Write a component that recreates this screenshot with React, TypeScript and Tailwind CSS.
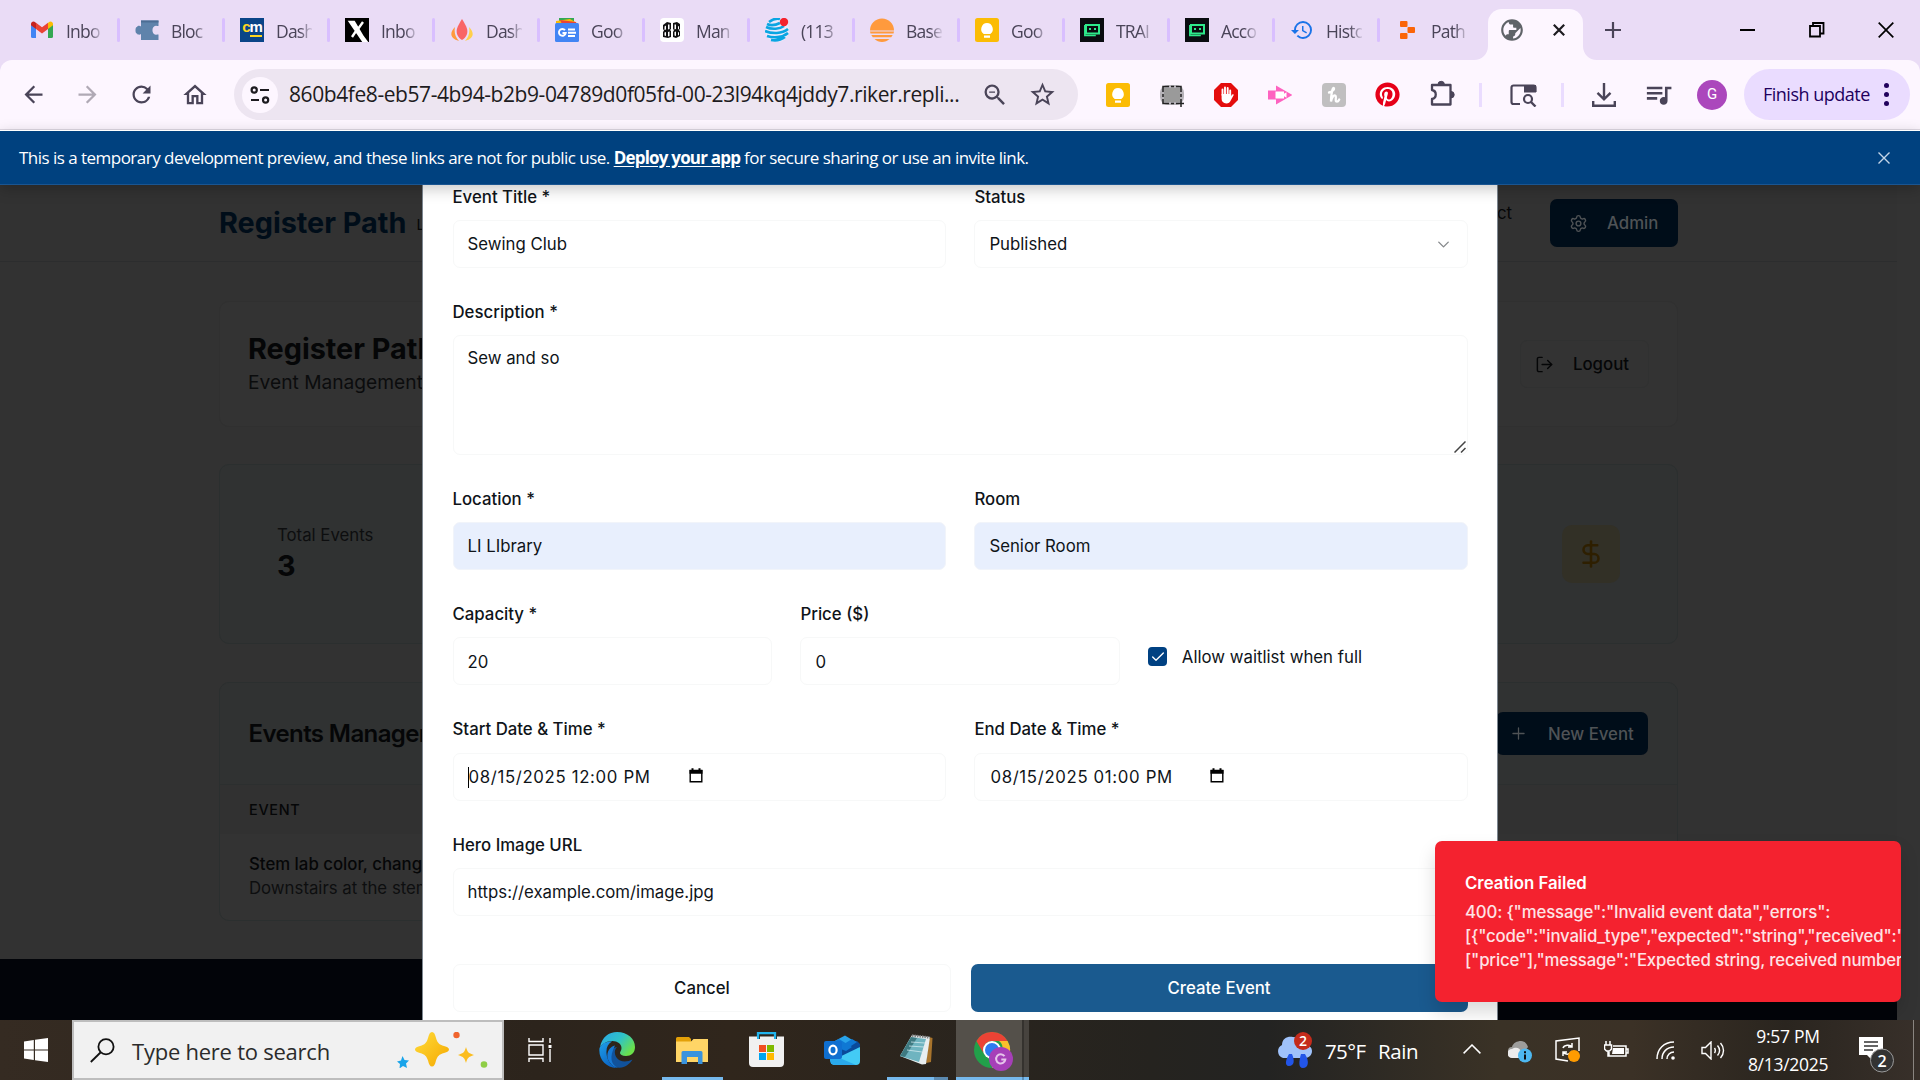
import React from "react";
import { Settings, LogOut, DollarSign, Plus, ChevronDown, Check } from "lucide-react";
import {
  MdArrowBack,
  MdArrowForward,
  MdRefresh,
  MdOutlineHome,
  MdZoomOut,
  MdStarBorder,
  MdQueueMusic,
  MdHistory,
  MdPublic,
} from "react-icons/md";
import { FaPinterest } from "react-icons/fa";

type Kids = { children?: React.ReactNode };

/* ---------- favicons ---------- */

const Svg24 = ({ children, size = 24 }: Kids & { size?: number }) => (
  <svg width={size} height={size} viewBox="0 0 24 24" className="block shrink-0">
    {children}
  </svg>
);

const Gmail = () => (
  <Svg24>
    <path d="M1 6v12.5A1.5 1.5 0 0 0 2.500 20H6V9.500z" fill="#4285f4" />
    <path d="M23 6v12.500a1.500 1.500 0 0 1-1.500 1.500H18V9.500z" fill="#34a853" />
    <path d="M18 5v6l5-3.700V6c0-2.400-2.500-3.200-4-2z" fill="#fbbc04" />
    <path d="M6 5v6L1 7.300V6c0-2.400 2.500-3.200 4-2z" fill="#c5221f" />
    <path d="M6 11V4.800l6 4.500 6-4.500V11l-6 4.600z" fill="#ea4335" />
  </Svg24>
);
const Puzzle = () => (
  <Svg24>
    <path d="M6 2.500h17.500v5.500h-1.500c-6-2-6 10.500 0 8.500h1.500V22H6v-6c-1 1-3.500 1-4-.5-2 .5-2-7 0-6.500C2.500 7.500 5 7.500 6 8.500z" fill="#5f83ab" />
    <path d="M6 2.500h17.500v2H6z" fill="#4c6d94" />
  </Svg24>
);
const Cm = () => (
  <div className="flex h-6 w-6 shrink-0 flex-col items-center bg-[#0a4588] font-['Liberation_Sans'] text-[15px] font-bold leading-[17px] tracking-[-1px] text-white">
    <span>
      <span className="text-[#ffd51e]">c</span>m
    </span>
    <span className="ml-2 h-[2px] w-3 bg-[#ffd51e]" />
  </div>
);
const XIcon = () => (
  <Svg24>
    <rect width="24" height="24" fill="#000" />
    <path d="M5 4h4l9 15 3 4h-3zM18 4l-5 7M11 13l-4 6" fill="#fff" stroke="#fff" strokeWidth="2.400" />
  </Svg24>
);
const Flame = () => (
  <Svg24>
    <path d="M5 9c-5 5-6 11 4 14C5 19 4 14 5 9z" fill="#ff9a3c" />
    <path d="M19 9c5 5 6 11-4 14 4-4 5-9 4-14z" fill="#ffd04a" />
    <path d="M12 1c5 8 6 11 5 15-1 3-3 5-5 6-2-1-4-3-5-6-1-4 0-7 5-15z" fill="#f96565" />
  </Svg24>
);
const News = () => (
  <Svg24>
    <path d="M4 0h15v8H4z" fill="#34a853" />
    <path d="M1 3l14-2 7 4v4H1z" fill="#fbbc04" />
    <path d="M5 2l16 2v4H8z" fill="#ea4335" />
    <rect y="5" width="24" height="19" rx="1.500" fill="#4285f4" />
    <path d="M10 12.200a3.400 3.400 0 1 0 .7 2.800H7.500M13 11.500h7M13 14.700h8M13 18h7" fill="none" stroke="#fff" strokeWidth="1.900" />
  </Svg24>
);
const Man = () => (
  <Svg24>
    <rect width="24" height="24" rx="4" fill="#fff" />
    <path d="M3 7l4-3 4 1v6l-1 1 1 1v6l-3 1-5-1v-5l1-1.500L3 11zM13 5l4-1 3 2v5l-1 1 1 1.500V18l-4 2-3-1v-5l1-2-1-1z" fill="#111" />
    <path d="M4.500 8.500L6 7.500v4l-1.500.5zM4.500 14.500L6 14v4l-1.500-.5zM8 6.500h1.500V11L8 11.500zM14.500 6.500H16V11l-1.500.5zM18 8l1 .5v2.500l-1 .500zM14.500 14l1.500-.5V18l-1.500-.5zM18 14l1 .5V17l-1 .5zM8 14l1.500-.5V18L8 18.500z" fill="#fff" />
  </Svg24>
);
const Att = () => (
  <Svg24>
    <circle cx="12" cy="12" r="12" fill="#ece9fb" />
    <path
      d="M4 4c4-3 8-4 11-3M1 9c6 3 14 2 18-1M0 13c7 3 17 3 23-2M2 18c6 2 15 2 21-3M6 22c5 1 10 0 14-3M2 6c4 2 9 1 13-1"
      fill="none"
      stroke="#0aa5e2"
      strokeWidth="2.600"
    />
    <circle cx="19" cy="4" r="4.200" fill="#f5222d" />
  </Svg24>
);
const Base = () => (
  <Svg24>
    <path d="M0 12.500a12 12 0 0 1 24 0z" fill="#ff9a3d" />
    <path d="M0 13.500h24l-.5 2h-23zM1.300 17h21.400l-1.500 2.300H2.800zM4.500 21h15c-4 4-11 4-15 0z" fill="#ff9a3d" />
  </Svg24>
);
const Keep = () => (
  <Svg24>
    <rect width="24" height="24" rx="2.500" fill="#fbbc04" />
    <path d="M12 5a6 6 0 0 1 3.500 10.700v.3h-7v-.3A6 6 0 0 1 12 5zM9 17.500h6v2.300H9z" fill="#fff" />
  </Svg24>
);
const Robot = () => (
  <Svg24>
    <rect width="24" height="24" fill="#0a0c10" />
    <rect x="6" y="7" width="13" height="8.500" fill="none" stroke="#2eea8b" strokeWidth="2" />
    <path d="M4.800 7v10.500h11" fill="none" stroke="#2eea8b" strokeWidth="1.500" />
    <path d="M9 10h2v2H9zM14 10h2v2h-2z" fill="#2eea8b" />
  </Svg24>
);
const Hist = () => <MdHistory size={24} color="#1a73e8" className="shrink-0" />;
const Replit = () => (
  <Svg24>
    <rect x="5" y="3" width="7.500" height="6" rx="1" fill="#fb6508" />
    <rect x="12.500" y="9" width="7.500" height="6" rx="1" fill="#fb6508" />
    <rect x="5" y="15" width="7.500" height="6" rx="1" fill="#fb6508" />
  </Svg24>
);

const tabs: { icon: React.ReactNode; text: string }[] = [
  { icon: <Gmail />, text: "Inbo" },
  { icon: <Puzzle />, text: "Bloc" },
  { icon: <Cm />, text: "Dash" },
  { icon: <XIcon />, text: "Inbo" },
  { icon: <Flame />, text: "Dash" },
  { icon: <News />, text: "Goo" },
  { icon: <Man />, text: "Man" },
  { icon: <Att />, text: "(113" },
  { icon: <Base />, text: "Base" },
  { icon: <Keep />, text: "Goo" },
  { icon: <Robot />, text: "TRAI" },
  { icon: <Robot />, text: "Acco" },
  { icon: <Hist />, text: "Histo" },
  { icon: <Replit />, text: "Path" },
];

function TabStrip() {
  return (
    <div className="flex h-[60px] items-start bg-[#eadcf6] pl-[30px]">
      {tabs.map((t, i) => (
        <div key={i} className="flex h-[60px] w-[105px] shrink-0 items-center">
          {t.icon}
          <span className="ml-[12px] w-[36px] shrink-0 overflow-hidden whitespace-nowrap pt-[3px] text-[17.500px] tracking-[-0.8px] text-[#4a4458] [mask-image:linear-gradient(to_right,black_65%,transparent_105%)]">
            {t.text}
          </span>
          {i < 13 && <span className="ml-auto mr-[15px] h-6 w-[3px] rounded bg-[#d9bfff]" />}
        </div>
      ))}
      <div className="relative -ml-3 mt-[9px] flex h-[51px] w-[95px] items-center rounded-t-[14px] bg-[#fdf6ff] pb-[9px]">
        <svg width="14" height="14" className="absolute -left-[14px] bottom-0">
          <path d="M14 0v14H0C8 14 14 8 14 0z" fill="#fdf6ff" />
        </svg>
        <svg width="14" height="14" className="absolute -right-[14px] bottom-0">
          <path d="M0 0v14h14C6 14 0 8 0 0z" fill="#fdf6ff" />
        </svg>
        <MdPublic size={26} color="#5f6368" className="ml-[11px] -scale-x-100" />
        <svg width="12" height="12" viewBox="0 0 12 12" className="ml-[28px]">
          <path d="M.8.8l10.400 10.400M11.200.8L.8 11.200" stroke="#1d1b20" strokeWidth="2.200" />
        </svg>
      </div>
      <svg width="16" height="16" viewBox="0 0 16 16" className="ml-[22px] mt-[22px]">
        <path d="M8 0v16M0 8h16" stroke="#4a4458" strokeWidth="2.200" />
      </svg>
      <div className="ml-auto mr-[26px] mt-[22px] flex h-4 items-center">
        <span className="h-[2px] w-[15px] bg-black" />
        <svg width="16" height="16" viewBox="0 0 16 16" className="ml-[54px]">
          <path d="M1 4h10v10.500H1zM4 4V1h10.500v10.500H11" fill="none" stroke="#000" strokeWidth="1.800" />
        </svg>
        <svg width="16" height="16" viewBox="0 0 16 16" className="ml-[53px]">
          <path d="M.7.7l14.600 14.600M15.300.7L.7 15.300" stroke="#000" strokeWidth="1.700" />
        </svg>
      </div>
    </div>
  );
}

function Toolbar() {
  return (
    <div className="bg-[#eadcf6]">
      <div className="flex h-[70px] items-center rounded-t-[12px] border-b border-[#dfd8e3] bg-[#fdf6ff] pl-[20px]">
        <MdArrowBack size={27} color="#4a4458" />
        <MdArrowForward size={27} color="#b0a9b5" className="ml-[27px]" />
        <MdRefresh size={27} color="#4a4458" className="ml-[27px]" />
        <MdOutlineHome size={28} color="#4a4458" className="ml-[26px]" />
        <div className="ml-[25px] flex h-[51px] w-[844px] items-center rounded-full bg-[#ede5f1] pl-2">
          <span className="flex h-9 w-9 shrink-0 items-center justify-center rounded-full bg-[#fdf6ff]">
            <svg width="20" height="20" viewBox="0 0 20 20" fill="none" stroke="#1d1b20" strokeWidth="2.200">
              <circle cx="4.200" cy="5" r="2.600" />
              <path d="M10 5h9M1 15h8" />
              <circle cx="15.600" cy="15" r="2.600" />
            </svg>
          </span>
          <span className="ml-[11px] w-[680px] shrink-0 whitespace-nowrap text-[21px] tracking-[-0.42px] text-[#1d1b20]">
            860b4fe8-eb57-4b94-b2b9-04789d0f05fd-00-23l94kq4jddy7.riker.repli...
          </span>
          <MdZoomOut size={28} color="#4a4458" className="ml-[12px] shrink-0" />
          <MdStarBorder size={29} color="#4a4458" className="ml-[19px] shrink-0" />
        </div>
        <div className="ml-[28px] flex items-center gap-[30px]">
          <Keep />
          <Svg24>
            <rect x="0" y="2" width="24" height="20" rx="8" fill="#b5b2b8" />
            <rect x="4" y="5" width="16" height="14" fill="#9a9a9a" />
            <path d="M3 9V3.500h6M11 3.500h3M16 3.500h5V9M21 11v3M3 11v3M3 16v4.500h6M11 20.500h3M16 20.500h8M21 16v8" fill="none" stroke="#222" strokeWidth="1.500" />
          </Svg24>
          <Svg24>
            <path d="M7 0h10l7 7v10l-7 7H7l-7-7V7z" fill="#e40d0d" />
            <path d="M8.500 12V6.500M11 11V4.500M13.700 11V5M16.200 12V7.500" stroke="#fff" strokeWidth="1.900" strokeLinecap="round" />
            <path d="M7.600 11h9.500v2l1.200-1.500c.6-.8 1.800-.2 1.300.8L17 17c-1 2.500-2.500 3.500-4.700 3.500-3 0-4.700-2-4.700-4.700z" fill="#fff" />
          </Svg24>
          <Svg24>
            <path d="M0 7.500h8v9H0zM8 2.500L24.500 12 8 21.500z" fill="#fe62c0" />
            <path d="M7.500 8.500H16v2.200l2.500-1.500v5.600L16 13.300v2.200H7.500z" fill="#fff" />
          </Svg24>
          <Svg24>
            <rect width="24" height="24" rx="4" fill="#c0bfc0" />
            <path d="M7 9.500c3.500-.5 6-4 4.700-4.500S9 12 9 18.500c.8-4 2.500-6.500 4.200-6s-.5 5.500 1.200 6 2.300-1 2.800-2" fill="none" stroke="#fff" strokeWidth="2.300" strokeLinecap="round" />
          </Svg24>
          <span className="-mx-px rounded-full bg-white">
            <FaPinterest size={25} color="#e60019" />
          </span>
          <svg width="25" height="26" viewBox="0 0 25 26" className="-mt-[3px] ml-px">
            <path
              d="M2 5h18.500v19.500H2v-5.500c5-1 5-8 0-9z"
              fill="none"
              stroke="#4a4458"
              strokeWidth="2.300"
              strokeLinejoin="round"
            />
            <path d="M8 4.500a3.200 3.200 0 0 1 6.400 0zM21 11.500a3.200 3.200 0 0 1 0 6.400z" fill="#4a4458" stroke="#4a4458" />
          </svg>
        </div>
        <span className="ml-[24px] h-6 w-[3px] bg-[#eadcff]" />
        <svg width="27" height="24" viewBox="0 0 27 24" className="ml-[28px]">
          <path d="M10 21H3.500A2 2 0 0 1 1.500 19V4.500a2 2 0 0 1 2-2h20a2 2 0 0 1 2 2V9" fill="none" stroke="#4a4458" strokeWidth="2.200" />
          <path d="M14 2h12v7.500H14z" fill="#4a4458" />
          <circle cx="18" cy="16" r="4" fill="none" stroke="#4a4458" strokeWidth="2.200" />
          <path d="M21 19l4.500 4.500" stroke="#4a4458" strokeWidth="2.400" />
        </svg>
        <span className="ml-[24px] h-6 w-[3px] bg-[#eadcff]" />
        <svg width="24" height="24" viewBox="0 0 24 24" className="ml-[28px]" fill="none" stroke="#4a4458" strokeWidth="2.400">
          <path d="M12 0v16M5.500 9.800l6.500 6.500 6.500-6.500M1.200 18v4.800h21.600V18" />
        </svg>
        <MdQueueMusic size={31} color="#4a4458" className="ml-[27px]" />
        <span className="ml-[23px] flex h-[30px] w-[30px] items-center justify-center rounded-full bg-[#ab47bc] font-['Roboto'] text-[15px] text-white">
          G
        </span>
        <div className="ml-[17px] flex h-[51px] w-[166px] items-center rounded-full bg-[#eadcff] pl-[19px]">
          <span className="w-[110px] whitespace-nowrap text-[18px] tracking-[-0.5px] text-[#21005d]">Finish update</span>
          <span className="ml-[11px] flex flex-col gap-[4px]">
            <span className="h-[5px] w-[5px] rounded-full bg-[#21005d]" />
            <span className="h-[5px] w-[5px] rounded-full bg-[#21005d]" />
            <span className="h-[5px] w-[5px] rounded-full bg-[#21005d]" />
          </span>
        </div>
      </div>
    </div>
  );
}

function Banner() {
  return (
    <div className="relative z-30 flex h-[55px] items-center border-b border-t border-b-[#1a5591] border-t-white bg-[#00417f] pl-[19px] text-[17px] text-white shadow-[0_4px_14px_rgba(0,0,0,0.22)]">
      <span className="whitespace-nowrap tracking-[-0.525px]">
        This is a temporary development preview, and these links are not for public use.{" "}
        <span className="font-bold tracking-[-0.8px] underline underline-offset-2">Deploy your app</span> for secure sharing or use an invite link.
      </span>
      <svg width="12" height="12" viewBox="0 0 12 12" className="ml-auto mr-[30px]">
        <path d="M.5.500l11 11M11.500.5l-11 11" stroke="#c5d6e8" strokeWidth="1.400" />
      </svg>
    </div>
  );
}

/* ---------- dimmed page behind the dialog ---------- */

function Backdrop() {
  return (
    <div className="flex h-full">
      <div className="w-[1897px] bg-[#323232] text-[#050607]">
        <header className="flex h-[77px] items-center border-b border-[#2c2d2e] pl-[219px] pr-[219px]">
          <span className="text-[28.8px] font-bold leading-none text-[#000d19]">Register Path</span>
          <span className="ml-[10px] mt-1 w-[120px] whitespace-nowrap text-[14.4px]">Library</span>
          <span className="ml-auto mb-[19px] text-[16.8px]">Contact</span>
          <div className="ml-[38px] flex h-12 w-[128px] items-center rounded-[7px] bg-[#000d19] pl-[19px] text-[#4f5356]">
            <Settings size={19} strokeWidth={1.800} />
            <span className="ml-[19px] pt-px text-[16.8px] font-medium">Admin</span>
          </div>
        </header>
        <main className="flex flex-col pl-[219px] pr-[219px] pt-[39px]">
          <section className="flex h-[126px] items-center justify-between rounded-[10px] border border-[#303030] bg-[#333333] px-[28px]">
            <div className="mb-[2px]">
              <div className="text-[28.8px] font-bold leading-[38px]">Register Path</div>
              <div className="text-[19.2px] leading-[29px] text-[#0b0c0d]">Event Management</div>
            </div>
            <div className="flex h-[48px] w-[129px] items-center rounded-[7px] border border-[#303131] pl-[14px]">
              <LogOut size={19} strokeWidth={1.800} />
              <span className="ml-[19px] pt-[2px] text-[16.8px] font-medium">Logout</span>
            </div>
          </section>
          <section className="mt-[37px] flex h-[180px] items-center justify-between rounded-[10px] border border-[#2b2f2f] bg-[#303232] pl-[57px] pr-[57px]">
            <div>
              <div className="text-[16.8px] leading-[24px] text-[#0d0e0f]">Total Events</div>
              <div className="text-[28.8px] font-bold leading-[38px]">3</div>
            </div>
            <div className="flex h-[58px] w-[58px] items-center justify-center rounded-[10px] bg-[#323026]">
              <DollarSign size={30} color="#2e1f00" strokeWidth={2} />
            </div>
          </section>
          <section className="mt-[38px] h-[239px] overflow-hidden rounded-[10px] border border-[#2b2f2f] bg-[#333333]">
            <div className="flex h-[102px] items-center justify-between border-b border-[#2c2f2f] bg-[#303232] pl-[28.500px] pr-[29px]">
              <span className="pt-px text-[24px] font-semibold tracking-[-0.6px]">Events Management</span>
              <div className="flex h-[43px] w-[152px] items-center rounded-[7px] bg-[#000d19] pl-[13px] text-[#4f5356]">
                <Plus size={19} strokeWidth={1.600} />
                <span className="ml-[20px] pt-[2px] text-[16.8px] font-medium">New Event</span>
              </div>
            </div>
            <div className="flex h-[49px] items-center bg-[#313131] pl-[29px] text-[14.4px] font-medium tracking-[0.72px]">EVENT</div>
            <div className="pl-[29px] pt-[18px] text-[16.8px] leading-[24px]">
              <div className="font-medium">Stem lab color, changing</div>
              <div className="text-[#0d0e0f]">Downstairs at the stem lab</div>
            </div>
          </section>
        </main>
        <footer className="mt-[38px] h-[70px] bg-[#020409]" />
      </div>
      <div className="flex-1 bg-[#333333]" />
    </div>
  );
}

/* ---------- dialog ---------- */

const Label = ({ children }: Kids) => <div className="mb-[14.4px] text-[16.8px] font-medium leading-[16.8px] text-[#0f1419]">{children}</div>;

function Field({ label, value, filled }: { label: string; value: React.ReactNode; filled?: boolean }) {
  return (
    <div>
      <Label>{label}</Label>
      <div
        className={
          "flex h-12 items-center rounded-[7px] border px-[14px] pt-[1.500px] text-[16.8px] text-[#0f1419] " +
          (filled ? "border-[#f1f4fa] bg-[#e8effd]" : "border-[#f7f8f8] bg-white")
        }
      >
        {value}
      </div>
    </div>
  );
}

const CalendarGlyph = () => (
  <svg width="14" height="15" viewBox="0 0 14 15" className="mb-[4px] ml-[38px]">
    <path d="M1.200 2.500h11.600v11.300H1.200z" fill="none" stroke="#000" strokeWidth="1.400" />
    <path d="M.5 2h13v3.800H.5zM2.500.3h2V2h-2zM9.500.3h2V2h-2z" fill="#000" />
  </svg>
);

const DateValue = ({ text, caret }: { text: string; caret?: boolean }) => (
  <>
    {caret && <span className="-mr-px h-[21px] w-px shrink-0 bg-black" />}
    <span className="ml-px w-[182px] whitespace-nowrap tracking-[0.65px]">{text}</span>
    <CalendarGlyph />
  </>
);

function EventDialog() {
  return (
    <div className="absolute left-[422px] top-0 h-full w-[1076px] border-x border-[#7d8791] bg-white pl-[29.500px] pr-[29.500px] pt-[3.600px]">
      <div className="flex flex-col gap-[36px]">
        <div className="grid grid-cols-2 gap-[28.8px]">
          <Field label="Event Title *" value="Sewing Club" />
          <Field
            label="Status"
            value={
              <>
                Published
                <ChevronDown size={19} strokeWidth={1.700} className="ml-auto text-[#85888b]" />
              </>
            }
          />
        </div>
        <div>
          <Label>Description *</Label>
          <div className="flex h-[120px] justify-between rounded-[7px] border border-[#f7f8f8] pl-[14px] pt-[10px] text-[16.8px] leading-[24px] text-[#0f1419]">
            <span>Sew and so</span>
            <svg width="12" height="12" viewBox="0 0 12 12" className="mb-[1px] mr-[1px] self-end">
              <path d="M.5 11.500l11-11M7 11.500L11.500 7" stroke="#444" strokeWidth="1.500" />
            </svg>
          </div>
        </div>
        <div className="grid grid-cols-2 gap-[28.8px]">
          <Field label="Location *" value="LI LIbrary" filled />
          <Field label="Room" value="Senior Room" filled />
        </div>
        <div className="grid grid-cols-3 gap-[28.8px]">
          <Field label="Capacity *" value="20" />
          <Field label="Price ($)" value="0" />
          <div className="flex items-center pt-[22px]">
            <span className="flex h-[19px] w-[19px] items-center justify-center rounded-[4px] bg-[#004182]">
              <Check size={16} color="#fff" strokeWidth={2} />
            </span>
            <span className="ml-[14.500px] pt-px text-[16.8px] text-[#0f1419]">Allow waitlist when full</span>
          </div>
        </div>
        <div className="grid grid-cols-2 gap-[28.8px]">
          <Field label="Start Date & Time *" value={<DateValue text="08/15/2025 12:00 PM" caret />} />
          <Field label="End Date & Time *" value={<DateValue text="08/15/2025 01:00 PM" />} />
        </div>
        <Field label="Hero Image URL" value="https://example.com/image.jpg" />
      </div>
      <div className="mt-[48px] flex h-12 gap-[19.2px] text-[16.8px] font-medium">
        <div className="flex flex-1 items-center justify-center rounded-[7px] border border-[#f7f8f8] pt-px text-[#0f1419]">Cancel</div>
        <div className="flex flex-1 items-center justify-center rounded-[7px] bg-[#1a5a8f] pt-px text-white">Create Event</div>
      </div>
    </div>
  );
}

function Toast() {
  return (
    <div className="absolute left-[1435px] top-[656px] h-[161px] w-[466px] overflow-hidden rounded-[7px] bg-[#f4222f] pl-[30px] pt-[30px] text-[16.8px] leading-[24px] text-white shadow-[0_10px_18px_rgba(0,0,0,0.15)]">
      <div className="font-semibold">Creation Failed</div>
      <div className="mt-[5px] whitespace-nowrap font-medium tracking-[-0.17px] text-[#fee3e5]">
        <div>{'400: {"message":"Invalid event data","errors":'}</div>
        <div>{'[{"code":"invalid_type","expected":"string","received":"'}</div>
        <div>{'["price"],"message":"Expected string, received number'}</div>
      </div>
    </div>
  );
}

/* ---------- taskbar ---------- */

const EdgeLogo = () => (
  <svg width="36" height="36" viewBox="0 0 36 36">
    <defs>
      <linearGradient id="eg1" x1="0" y1="0" x2="1" y2=".6">
        <stop offset="0" stopColor="#2aa5e8" />
        <stop offset=".55" stopColor="#2fc3c8" />
        <stop offset="1" stopColor="#6be04a" />
      </linearGradient>
      <linearGradient id="eg2" x1="0" y1="0" x2=".6" y2="1">
        <stop offset="0" stopColor="#1fa0e8" />
        <stop offset="1" stopColor="#0a62c4" />
      </linearGradient>
    </defs>
    <path d="M1 15C3 5 10 0 18 0c11 0 18 7 18 15 0 6-4 9-9 9-4 0-6-1.500-6-3s1.500-2 1.500-5c0-4-4-7-9-7-6 0-10 3-12.500 6z" fill="url(#eg1)" />
    <path d="M.5 16C3 11 8 9 13 9.500c-4 2-6 6-5.500 12C8 29 13 35 19 36 8 36.500-1 28 .5 16z" fill="url(#eg2)" />
    <path d="M18 15c-5 1-10 5-8.500 11 1.500 6 6 10 11 9.800 6-.5 10-3.500 13-8.300-6 3-13 2.500-16-2-2.500-4-2-8 .5-10.500z" fill="#11529b" />
    <path d="M16 13.500c-5 1-8.500 6-7.500 12.500C10 31 14 35 19 35.800 12 33 10 25 16 13.500z" fill="#1578d4" />
  </svg>
);
const FolderIcon = () => (
  <svg width="32" height="27" viewBox="0 0 32 27">
    <path d="M0 1.500A1.500 1.500 0 0 1 1.500 0H13l2 2v3H0z" fill="#e3a008" />
    <path d="M0 4.500h15L17.500 2H32v23H0z" fill="#ffd566" />
    <path d="M5.500 27V15.500a1.500 1.500 0 0 1 1.500-1.500h18a1.500 1.500 0 0 1 1.500 1.500V27H22v-7H11v7z" fill="#3993dd" />
  </svg>
);
const StoreIcon = () => (
  <svg width="35" height="36" viewBox="0 0 35 36">
    <path d="M9 7V1.200h17V7" fill="none" stroke="#22b5ee" strokeWidth="2.300" />
    <path d="M0 4.500h8v2.500h3V4.500h14V7h3V4.500h7V31a4 4 0 0 1-4 4H4a4 4 0 0 1-4-4z" fill="#f1f1f1" />
    <path d="M10 13h7v7h-7z" fill="#f25022" />
    <path d="M18 13h7v7h-7z" fill="#7fba00" />
    <path d="M10 21h7v7h-7z" fill="#00a4ef" />
    <path d="M18 21h7v7h-7z" fill="#ffb900" />
  </svg>
);
const OutlookIcon = () => (
  <svg width="36" height="31" viewBox="0 0 36 31">
    <path d="M7 8L21 0.500 35 9v12L18 29H7z" fill="#28a3ea" />
    <path d="M18 13L33 6l3 3v3L18 24z" fill="#0a4a9a" />
    <path d="M10 6.500l5-2.500 13 8-6 4-8-3zM20 9l8-5 5 3-12 8z" fill="#0f78d4" />
    <path d="M36 12v14a4 4 0 0 1-4 4H11a4 4 0 0 1-4-4z" fill="#43cbf5" />
    <path d="M6 21l12 3 14 6H11a5 5 0 0 1-5-4z" fill="#2aa9ec" />
    <rect y="6" width="18" height="18" rx="2" fill="#0f6fd0" />
    <ellipse cx="9" cy="15" rx="3.600" ry="4.300" fill="none" stroke="#fff" strokeWidth="2.200" />
  </svg>
);
const NotepadIcon = () => (
  <svg width="33" height="32" viewBox="0 0 33 32">
    <path d="M29 4l3.500 1-1.500 24-5 1z" fill="#a8742c" />
    <path d="M12 2l18 2-4 27-4 .5L0 23z" fill="#e8eef0" />
    <path d="M11 4l15 2-7 23L0 23z" fill="#6fb4c0" />
    <path d="M11 4l6 1L5 24l-5-1z" fill="#235a60" opacity=".65" />
    <path d="M11 9l14 1M9 13l15 1M7 17l15 2" stroke="#cfe9ee" strokeWidth=".8" />
    <path d="M12 2.500l18 2" stroke="#7d7d7d" strokeWidth="2.500" strokeDasharray="1.500 1" />
  </svg>
);
const ChromeIcon = () => (
  <svg width="40" height="40" viewBox="0 0 40 40">
    <circle cx="18" cy="18" r="18" fill="#22a04a" />
    <path d="M2.400 9A18 18 0 0 1 33.600 9H18a9 9 0 0 0-8 13z" fill="#ea4335" />
    <path d="M33.600 9A18 18 0 0 1 18 36l8-13.500A9 9 0 0 0 25 9z" fill="#fbc02d" />
    <circle cx="18" cy="18" r="9" fill="#fff" />
    <circle cx="18" cy="18" r="7" fill="#2d7bf0" />
    <circle cx="27" cy="27" r="12" fill="#a63fb8" />
    <path d="M30.500 24.200a4.600 4.600 0 1 0 .8 3.300H27.300" fill="none" stroke="#e5c4ea" strokeWidth="2" />
  </svg>
);

function Taskbar() {
  return (
    <div className="flex h-[60px] bg-[linear-gradient(90deg,#352b22_0%,#2c241c_28%,#30261c_38%,#25231f_60%,#232322_66%,#3a3226_78%,#3b3126_85%,#2a251f_93%,#38302a_100%)]">
      <div className="flex w-[72px] items-center justify-center">
        <svg width="24" height="24" viewBox="0 0 24 24" fill="#fff">
          <path d="M0 3.400L9.800 2v9.500H0zM11 1.800L24 0v11.500H11zM0 12.600h9.800V22L0 20.600zM11 12.600h13V24l-13-1.800z" />
        </svg>
      </div>
      <div className="flex w-[432px] items-center border-2 border-[#bdbdbd] bg-[#f1f1f1]">
        <svg width="25" height="25" viewBox="0 0 25 25" fill="none" stroke="#111" strokeWidth="1.800" className="ml-4">
          <circle cx="16" cy="8.700" r="7.600" />
          <path d="M10.500 14.500L.8 24" />
        </svg>
        <span className="ml-[17px] w-[200px] whitespace-nowrap pt-[3px] text-[22px] tracking-[-0.24px] text-[#2b2b2b]">Type here to search</span>
        <svg width="92" height="36" viewBox="0 0 92 36" className="ml-[65px] mt-[-1px]">
          <defs>
            <linearGradient id="sp" x1="0" y1="0" x2="1" y2="1">
              <stop offset="0" stopColor="#ffdc3a" />
              <stop offset="1" stopColor="#f5a800" />
            </linearGradient>
          </defs>
          <path d="M35 0c2 0 3 2 4 6 1.500 5 3 6.500 8 8 3.500 1 5 2 5 3.500s-1.500 2.500-5 3.500c-5 1.500-6.500 3-8 7.500-1 4-2 6-4 6s-3-2-4-6c-1.500-4.500-3-6-8-7.500-3.500-1-5-2-5-3.500s1.500-2.500 5-3.500c5-1.500 6.500-3 8-8 1-4 2-6 4-6z" fill="url(#sp)" />
          <path d="M69 15c1.500 5 2 6 8 8-6 2-6.500 3-8 8-1.500-5-2-6-8-8 6-2 6.500-3 8-8z" fill="#fbbd1e" />
          <path d="M5.500 24l2 4 4.500.5-3 3 1 4.500-4-2-3.500 2.500.5-4.500L0 29.500l4-1z" fill="#18a4ea" />
          <circle cx="59.500" cy="3" r="3.200" fill="#f0642d" />
          <circle cx="87" cy="32.500" r="3.300" fill="#8fce46" />
        </svg>
      </div>
      <div className="flex w-[71px] items-center justify-center">
        <svg width="24" height="24" viewBox="0 0 24 24" fill="none" stroke="#fff" strokeWidth="1.400" className="ml-px">
          <path d="M1 0v3.500h14V0M1 7h14v10H1zM1 24v-3.500h14V24M22 0v5M22 11v13" />
          <path d="M20.500 7h3v3h-3z" fill="#fff" stroke="none" />
        </svg>
      </div>
      <div className="flex w-[84px] items-center justify-center">
        <EdgeLogo />
      </div>
      <div className="ml-[3px] flex w-[64px] flex-col">
        <div className="flex h-[57px] w-[61px] items-center pl-[14px] pt-[3px]">
          <FolderIcon />
        </div>
        <span className="h-[3px] w-[61px] bg-[#76b9ed]" />
      </div>
      <div className="flex w-[79px] items-center justify-center pl-[2px]">
        <StoreIcon />
      </div>
      <div className="flex w-[77px] items-center justify-center pr-[4px]">
        <OutlookIcon />
      </div>
      <div className="ml-[5px] flex w-[61px] flex-col">
        <div className="flex h-[57px] items-center pl-[13px]">
          <NotepadIcon />
        </div>
        <div className="flex h-[3px]">
          <span className="w-[47px] bg-[#76b9ed]" />
          <span className="w-[14px] bg-[#5c8ab0]" />
        </div>
      </div>
      <div className="ml-[8px] flex w-[73px] flex-col">
        <div className="flex h-[57px]">
          <div className="flex w-[66px] items-start bg-[#54504a] pl-[18px] pt-3">
            <ChromeIcon />
          </div>
          <span className="w-[2px] bg-[#35322e]" />
          <span className="w-[5px] bg-[#47433e]" />
        </div>
        <div className="flex h-[3px]">
          <span className="w-[66px] bg-[#76b9ed]" />
          <span className="w-[2px] bg-[#5b8db5]" />
          <span className="w-[5px] bg-[#76b9ed]" />
        </div>
      </div>
      <div className="ml-[247px] flex items-center">
        <svg width="38" height="39" viewBox="0 0 38 39">
          <path d="M7 27a7 7 0 0 1-1-13C6 7 12 5 17 6c7 0 11 4 11 8 6 0 8 3 8 6 0 4-3 7-7 7z" fill="#9fc2fb" />
          <path d="M13 23c-3 5-5 12 0 12s6-5 3-12zM25 23c-2 7-3 14 2 14s7-6 2-14z" fill="#2255e8" />
          <circle cx="27" cy="10" r="9" fill="#c42b1c" />
          <text x="27" y="15" textAnchor="middle" fontSize="14" fill="#fff" fontFamily="Open Sans, sans-serif" fontWeight="600">
            2
          </text>
        </svg>
        <span className="ml-[11px] w-[53px] whitespace-nowrap pt-[3px] text-[20.500px] tracking-[-0.6px] text-white">75°F</span>
        <span className="w-[84px] pt-[3px] text-[20.500px] tracking-[-0.4px] text-white">Rain</span>
        <svg width="18" height="10" viewBox="0 0 18 10" className="mb-[2px] ml-px" fill="none" stroke="#fff" strokeWidth="1.500">
          <path d="M.6 9.400L9 1l8.400 8.400" />
        </svg>
        <svg width="25" height="22" viewBox="0 0 25 22" className="ml-[27px] mt-1">
          <path d="M4 14a4 4 0 0 1 0-8c1-4 5-6 9-6s6 3 7 6l-6 8z" fill="#9d9d9b" />
          <path d="M4 17a4.500 4.500 0 0 1 0-9c3-2 8-2 9 3v6z" fill="#ececec" />
          <circle cx="17" cy="14.500" r="7" fill="#4db8f0" />
          <path d="M17 13.500v5M17 10.200v2" stroke="#111" strokeWidth="2" />
        </svg>
        <svg width="26" height="26" viewBox="0 0 26 26" className="ml-[22px]" fill="none" stroke="#fff" strokeWidth="1.500">
          <path d="M24 14V1L1 4v18l12 2M8 11c1-3 7-4 9-1M17 6v4h-4M17 14c-1 4-7 4-9 1M8 19v-4h4" />
          <circle cx="19" cy="19" r="6" fill="#ff9b00" stroke="none" />
        </svg>
        <svg width="25" height="18" viewBox="0 0 25 18" className="-mt-px ml-[23px]" fill="none" stroke="#fff" strokeWidth="1.500">
          <path d="M9 5h13v10H5v-4M22 8h2v4h-2M2 0v4M6 0v4M.5 4h7v4l-2 2h-3l-2-2zM4 10v5h2" />
          <path d="M9 7h11v6H8z" fill="#fff" stroke="none" />
        </svg>
        <svg width="20" height="20" viewBox="0 0 20 20" className="ml-[27px] mt-[2px]" fill="none" stroke="#fff" strokeWidth="1.500">
          <path d="M1 18C1 8 8 1 18 1M6 18C6 11 11 6 18 6M11 18c0-4 3-7 7-7" />
          <circle cx="17" cy="17" r="1.800" fill="#fff" stroke="none" />
        </svg>
        <svg width="24" height="19" viewBox="0 0 24 19" className="ml-[25px]" fill="none" stroke="#fff" strokeWidth="1.400">
          <path d="M1 6.500h3.500L10 1v17l-5.500-5.500H1zM13.500 7c1 1.500 1 3.500 0 5M16.500 4.500c2.500 3 2.500 7 0 10M19.500 2c4 4.500 4 10.500 0 15" />
        </svg>
        <div className="ml-[14px] flex w-[98px] flex-col items-center text-[17.500px] leading-[28px] tracking-[-0.3px] text-white">
          <span>9:57 PM</span>
          <span>8/13/2025</span>
        </div>
        <svg width="40" height="40" viewBox="0 0 40 40" className="ml-[22px] mt-2.5">
          <path d="M0 2h24v18H13v5l-5-5H0z" fill="#fff" />
          <path d="M5 7h14M5 11h14M5 15h9" stroke="#333" strokeWidth="1.300" />
          <circle cx="23" cy="25.500" r="11.500" fill="#333" stroke="#9a9a9a" strokeWidth="1" />
          <text x="23" y="31.500" textAnchor="middle" fontSize="16" fill="#fff" fontFamily="Open Sans, sans-serif" fontWeight="600">
            2
          </text>
        </svg>
      </div>
      <span className="ml-auto mr-[6px] h-full w-px bg-[#8a8580]" />
    </div>
  );
}

export default function App() {
  return (
    <div className="flex h-[1080px] w-[1920px] flex-col overflow-hidden font-['Open_Sans',sans-serif]">
      <TabStrip />
      <Toolbar />
      <Banner />
      <div className="relative h-[835px] overflow-hidden font-['Inter',sans-serif]">
        <Backdrop />
        <EventDialog />
        <Toast />
      </div>
      <Taskbar />
    </div>
  );
}
